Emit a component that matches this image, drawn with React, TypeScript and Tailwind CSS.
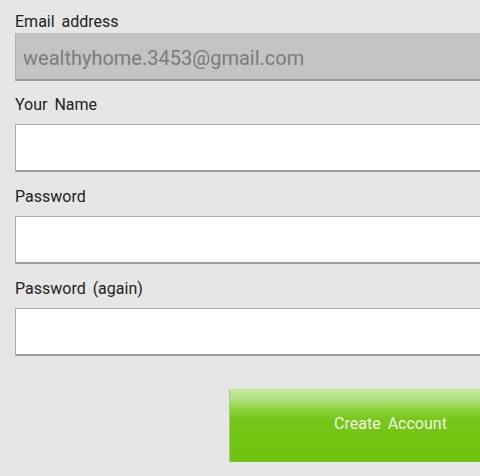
export default function App() {
  const fields = ["Your Name", "Password", "Password (again)"];

  return (
    <main className="w-[480px] h-[476px] overflow-hidden bg-[#e6e6e6] pl-[15px] font-['Roboto',sans-serif]">
      <div className="pt-[12px]">
        <label className="block text-[16px] leading-[20px] text-[#222] [word-spacing:3px]">Email address</label>
        <div className="mt-[1px] h-[48px] w-[480px] flex items-center border-l border-[#b4b2b4] border-b-2 border-b-[#9a9a9a] bg-[#c4c2c4] pl-[7px] pt-[3px]">
          <span className="text-[20px] text-[#7c7b7c]">wealthyhome.3453@gmail.com</span>
        </div>
      </div>

      {fields.map((f, i) => (
        <div key={f} className={i === 0 ? "mt-[14px]" : "mt-[15px]"}>
          <label className="block text-[16px] leading-[20px] text-[#222] [word-spacing:3px]">{f}</label>
          <div className="mt-[9px] h-[48px] w-[480px] border-t border-l border-[#acacac] border-b-2 border-b-[#9c9c9c] bg-white" />
        </div>
      ))}

      <button className="mt-[33px] ml-[214px] flex h-[73px] w-[322px] items-center justify-center border-l border-[#9ad85a] bg-[linear-gradient(to_bottom,#c4e99a_0%,#b4e283_14%,#8ed23c_28%,#76c618_42%,#6ec30f_100%)] pb-[4px] text-[16px] text-[#f2f9e6] [word-spacing:3px]">
        Create Account
      </button>
    </main>
  );
}
